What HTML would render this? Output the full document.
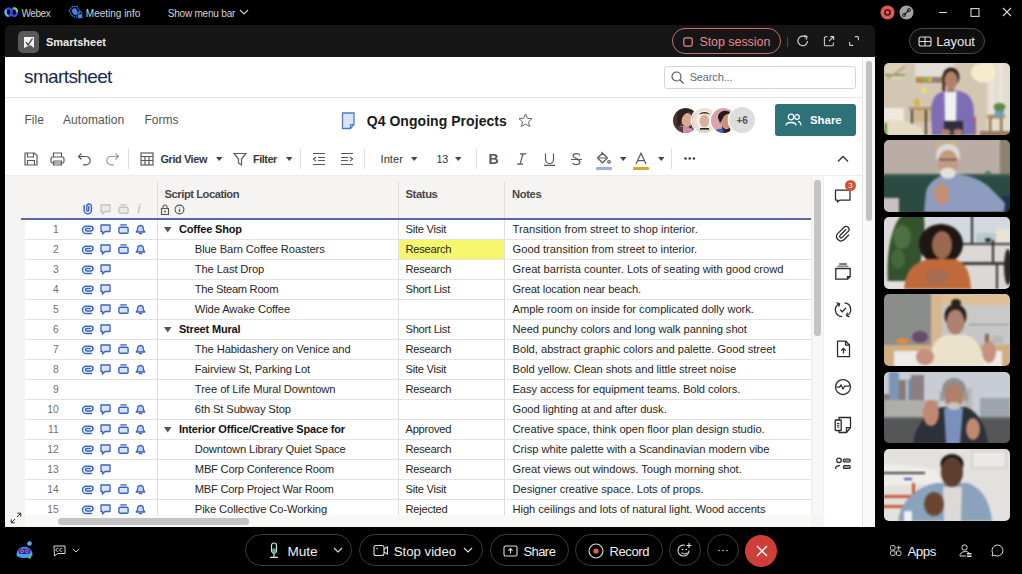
<!DOCTYPE html>
<html><head><meta charset="utf-8"><style>
html,body{margin:0;padding:0;}
body{width:1022px;height:574px;background:#000;position:relative;overflow:hidden;font-family:"Liberation Sans", sans-serif;}
.t{position:absolute;white-space:nowrap;line-height:1;}
.r{position:absolute;}
svg.r{overflow:visible;}
</style></head><body>
<svg class="r" style="left:4px;top:7px;" width="15" height="11" viewBox="0 0 15 11"><ellipse cx="4.5" cy="5.2" rx="2.9" ry="3.8" fill="none" stroke="#4346ee" stroke-width="2.2"/><path d="M4.5 9 A2.9 3.8 0 0 1 2.2 2.8" fill="none" stroke="#4fc3ee" stroke-width="2.2"/><ellipse cx="10.2" cy="5.2" rx="2.9" ry="3.8" fill="none" stroke="#4346ee" stroke-width="2.2"/><path d="M9.2 1.5 A2.9 3.8 0 0 1 13.1 5" fill="none" stroke="#5fe05a" stroke-width="2.2"/></svg>
<div class="t" style="left:21.4px;top:8.54px;font-size:10px;color:#d4d4d4;font-weight:normal;letter-spacing:-0.4px;">Webex</div>
<svg class="r" style="left:69px;top:5px;" width="15" height="14" viewBox="0 0 15 14"><g transform="rotate(-28 6 7)"><path d="M1.5 3 L6 1 L10.5 3 L10.5 7.5 C10.5 10 8 12 6 12.8 C4 12 1.5 10 1.5 7.5Z" fill="none" stroke="#4a7ee6" stroke-width="1.1" stroke-dasharray="1.6 0.6"/><path d="M3.5 4.2 L6 3 L8.5 4.2 L8.5 7.5 C8.5 9 7.2 10.2 6 10.8 C4.8 10.2 3.5 9 3.5 7.5Z" fill="#4a7ee6"/></g><rect x="8.5" y="9" width="5.2" height="4.4" rx="1" fill="#4a80ea" stroke="#000" stroke-width="0.6"/><path d="M9.6 9 V7.8 a1.5 1.5 0 0 1 3 0 V9" fill="none" stroke="#4a80ea" stroke-width="1"/></svg>
<div class="t" style="left:85.8px;top:8.54px;font-size:10px;color:#d4d4d4;font-weight:normal;letter-spacing:0px;">Meeting info</div>
<div class="t" style="left:167.7px;top:8.54px;font-size:10px;color:#d4d4d4;font-weight:normal;letter-spacing:-0.2px;">Show menu bar</div>
<svg class="r" style="left:239px;top:9px;" width="10" height="6" viewBox="0 0 10 6"><path d="M1 1 L5 5 L9 1" fill="none" stroke="#d0d0d0" stroke-width="1.1"/></svg>
<svg class="r" style="left:880px;top:5px;" width="15" height="15" viewBox="0 0 15 15"><circle cx="7.5" cy="7.5" r="7" fill="#e05a5d"/><circle cx="7.5" cy="7.5" r="2.6" fill="none" stroke="#2a0c0c" stroke-width="1.4"/></svg>
<svg class="r" style="left:899px;top:5px;" width="15" height="15" viewBox="0 0 15 15"><circle cx="7.5" cy="7.5" r="7" fill="#a0a0a0"/><path d="M5 10 L10 5" stroke="#222" stroke-width="1.3"/><circle cx="5" cy="10" r="1.5" fill="none" stroke="#222" stroke-width="1"/><circle cx="10" cy="5" r="1.5" fill="none" stroke="#222" stroke-width="1"/></svg>
<div class="r" style="left:939px;top:11.5px;width:8px;height:1.0999999999999996px;background:#d8d8d8;"></div>
<svg class="r" style="left:970px;top:8px;" width="10" height="9" viewBox="0 0 10 9"><rect x="1" y="0.6" width="8" height="7.8" fill="none" stroke="#d8d8d8" stroke-width="1.1"/></svg>
<svg class="r" style="left:1002px;top:7px;" width="10" height="10" viewBox="0 0 10 10"><path d="M1 1 L9 9 M9 1 L1 9" stroke="#d8d8d8" stroke-width="1.1"/></svg>
<div class="r" style="left:5px;top:25px;width:870px;height:32px;background:#161616;border-radius:6px 6px 0 0;"></div>
<div class="r" style="left:5px;top:57px;width:870px;height:470px;background:#ffffff;"></div>
<div class="r" style="left:18px;top:31px;width:21px;height:22px;background:#595959;border-radius:5px;"></div>
<svg class="r" style="left:23px;top:36px;" width="12" height="13" viewBox="0 0 12 13"><path d="M1 1 H11 V12 L7.5 9 L1 12Z" fill="#f2f2f2"/><path d="M3 6 L5 9 L9.5 2.5" fill="none" stroke="#3a3a3a" stroke-width="1.3"/></svg>
<div class="t" style="left:46px;top:36.79px;font-size:11px;color:#ececec;font-weight:bold;letter-spacing:0px;">Smartsheet</div>
<div class="r" style="left:672px;top:28px;width:109px;height:26px;background:transparent;border:1px solid #c8706b;border-radius:13px;box-sizing:border-box;"></div>
<svg class="r" style="left:683px;top:37px;" width="10" height="10" viewBox="0 0 10 10"><rect x="0.8" y="0.8" width="8.4" height="8.4" rx="1.8" fill="none" stroke="#ee8a82" stroke-width="1.2"/></svg>
<div class="t" style="left:699.4px;top:36.30px;font-size:12.4px;color:#ee8886;font-weight:normal;letter-spacing:0px;">Stop session</div>
<div class="r" style="left:786.5px;top:36.5px;width:1.0px;height:10.0px;background:#4a4a4a;"></div>
<svg class="r" style="left:796px;top:34px;" width="14" height="14" viewBox="0 0 14 14"><path d="M11.5 7 A4.8 4.8 0 1 1 9.8 3.2" fill="none" stroke="#cfcfcf" stroke-width="1.2"/><path d="M8 1.5 L11 2.5 L10.2 5.6" fill="none" stroke="#cfcfcf" stroke-width="1.2"/></svg>
<svg class="r" style="left:823px;top:35px;" width="12" height="12" viewBox="0 0 12 12"><path d="M4.5 1.8 H2.6 A1.2 1.2 0 0 0 1.4 3 V9.6 A1.2 1.2 0 0 0 2.6 10.8 H9.2 A1.2 1.2 0 0 0 10.4 9.6 V7.5" fill="none" stroke="#d0d0d0" stroke-width="1.1"/><path d="M6 6.2 L10.3 1.9 M7.3 1.6 H10.6 V4.9" fill="none" stroke="#d0d0d0" stroke-width="1.1"/></svg>
<svg class="r" style="left:849px;top:36px;" width="10" height="10" viewBox="0 0 10 10"><path d="M6.3 0.6 H8.4 A1 1 0 0 1 9.4 1.6 V3.7 M0.6 6.3 V8.4 A1 1 0 0 0 1.6 9.4 H3.7" fill="none" stroke="#d0d0d0" stroke-width="1.1" stroke-linecap="round"/></svg>
<div class="r" style="left:862px;top:57px;width:13px;height:470px;background:#f8f8f8;border-left:1px solid #e6e6e6;box-sizing:border-box;"></div>
<div class="r" style="left:865.5px;top:61px;width:6.0px;height:159.5px;background:#c2c2c2;border-radius:3px;"></div>
<div class="t" style="left:24px;top:66.72px;font-size:19px;color:#17294f;font-weight:normal;letter-spacing:-0.62px;">smartsheet</div>
<div class="r" style="left:664px;top:65.5px;width:191.5px;height:23.0px;background:#fff;border:1px solid #d5d5d5;border-radius:3px;box-sizing:border-box;"></div>
<svg class="r" style="left:671px;top:71px;" width="14" height="14" viewBox="0 0 14 14"><circle cx="5.5" cy="5.5" r="4.5" fill="none" stroke="#555" stroke-width="1.2"/><path d="M8.8 8.8 L12.6 12.6" stroke="#555" stroke-width="1.3"/></svg>
<div class="t" style="left:689.7px;top:72.29px;font-size:11px;color:#6a6a6a;font-weight:normal;letter-spacing:-0.15px;">Search...</div>
<div class="r" style="left:5px;top:97px;width:857px;height:1px;background:#e7e7e7;"></div>
<div class="t" style="left:24.5px;top:114.24px;font-size:12px;color:#545454;font-weight:normal;letter-spacing:0px;">File</div>
<div class="t" style="left:63px;top:114.24px;font-size:12px;color:#545454;font-weight:normal;letter-spacing:0.05px;">Automation</div>
<div class="t" style="left:144.4px;top:114.24px;font-size:12px;color:#545454;font-weight:normal;letter-spacing:0px;">Forms</div>
<svg class="r" style="left:341px;top:112px;" width="15" height="18" viewBox="0 0 15 18"><path d="M1.5 1 H13 V12.5 L9.5 16.5 H1.5Z" fill="#dbe3f7" stroke="#4d7bd0" stroke-width="1.3"/><path d="M13 12.5 H9.5 V16.5" fill="none" stroke="#4d7bd0" stroke-width="1.2"/></svg>
<div class="t" style="left:366.7px;top:114.15px;font-size:14px;color:#1a1a1a;font-weight:bold;letter-spacing:0.05px;">Q4 Ongoing Projects</div>
<svg class="r" style="left:518px;top:113px;" width="15" height="15" viewBox="0 0 15 15"><path d="M7.5 1 L9.4 5.3 L14 5.7 L10.5 8.8 L11.6 13.5 L7.5 11 L3.4 13.5 L4.5 8.8 L1 5.7 L5.6 5.3Z" fill="none" stroke="#666" stroke-width="1"/></svg>
<div class="r" style="left:672.5px;top:107.6px;width:25.4px;height:25.4px;border-radius:50%;overflow:hidden;box-shadow:0 0 0 1.3px #fff;"><svg style="position:absolute;left:-1.3px;top:-1.3px" width="28" height="28" viewBox="0 0 28 28"><rect width="28" height="28" fill="#4a3430"/><ellipse cx="16" cy="14" rx="5.5" ry="7" fill="#d9aa94"/><path d="M6 8 C8 2 20 1 23 6 C19 5 14 6 11 12 C10 16 9 20 6 20Z" fill="#2e201c"/><path d="M4 28 C6 20 12 19 16 21 C20 22 24 23 25 28Z" fill="#c98fb0"/><path d="M4 28 C5 22 8 20 12 21 L12 28Z" fill="#5a3a48"/></svg></div>
<div class="r" style="left:691.6999999999999px;top:107.6px;width:25.4px;height:25.4px;border-radius:50%;overflow:hidden;box-shadow:0 0 0 1.3px #fff;"><svg style="position:absolute;left:-1.3px;top:-1.3px" width="28" height="28" viewBox="0 0 28 28"><rect width="28" height="28" fill="#e9e1d2"/><ellipse cx="14" cy="14" rx="7.5" ry="10" fill="#f2eee8"/><ellipse cx="14.5" cy="15" rx="4.8" ry="6.5" fill="#d9b29a"/><path d="M9 9 C10 5 19 5 20 9 C18 7 11 7 9 9Z" fill="#3a2a22"/><path d="M7 28 C8 23 11 22 14 22 C17 22 21 23 22 28Z" fill="#d8d4d0"/><rect x="10" y="22" width="9" height="1.6" fill="#2a2020"/></svg></div>
<div class="r" style="left:711.0999999999999px;top:107.6px;width:25.4px;height:25.4px;border-radius:50%;overflow:hidden;box-shadow:0 0 0 1.3px #fff;"><svg style="position:absolute;left:-1.3px;top:-1.3px" width="28" height="28" viewBox="0 0 28 28"><rect width="28" height="28" fill="#d9a3aa"/><ellipse cx="16" cy="15" rx="5.5" ry="7.5" fill="#c69578"/><path d="M8 12 C7 4 20 2 22 9 C18 7 14 8 12 14 L10 17Z" fill="#231c1a"/><path d="M12 20 C14 24 18 24 20 21 L20 28 L12 28Z" fill="#2a201c"/><path d="M3 28 C5 23 9 22 13 23 L14 28Z" fill="#3a62b4"/></svg></div>
<div class="r" style="left:729.4px;top:107.3px;width:26px;height:26px;border-radius:50%;background:#dddddd;box-shadow:0 0 0 1.3px #fff;"></div>
<div class="t" style="left:736.5px;top:115.87px;font-size:10.2px;color:#585858;font-weight:bold;letter-spacing:-0.1px;">+6</div>
<div class="r" style="left:775px;top:104px;width:81px;height:32px;background:#2e7178;border-radius:3px;"></div>
<svg class="r" style="left:785px;top:113px;" width="17" height="14" viewBox="0 0 17 14"><circle cx="6" cy="4" r="2.8" fill="none" stroke="#fff" stroke-width="1.3"/><path d="M1 12.5 C1 8.5 11 8.5 11 12.5" fill="none" stroke="#fff" stroke-width="1.3"/><circle cx="12" cy="4" r="2.3" fill="none" stroke="#fff" stroke-width="1.2"/><path d="M13 8.3 C15.5 8.8 16 10.5 16 12.5" fill="none" stroke="#fff" stroke-width="1.2"/></svg>
<div class="t" style="left:810px;top:115.15px;font-size:11.4px;color:#ffffff;font-weight:bold;letter-spacing:0px;">Share</div>
<svg class="r" style="left:24px;top:152px;" width="14" height="14" viewBox="0 0 14 14"><path d="M1 1 H10.5 L13 3.5 V13 H1Z" fill="none" stroke="#5a5a5a" stroke-width="1.2"/><path d="M3.5 1 V5 H9.5 V1 M3.5 13 V8.5 H10.5 V13" fill="none" stroke="#5a5a5a" stroke-width="1.2"/></svg>
<svg class="r" style="left:50px;top:152px;" width="15" height="14" viewBox="0 0 15 14"><rect x="1" y="5" width="13" height="6" rx="1.5" fill="none" stroke="#5a5a5a" stroke-width="1.2"/><path d="M3.5 5 V1 H11.5 V5 M3.5 9 V13 H11.5 V9 H3.5" fill="none" stroke="#5a5a5a" stroke-width="1.2"/></svg>
<svg class="r" style="left:77px;top:152px;" width="15" height="14" viewBox="0 0 15 14"><path d="M4.5 1.5 L1.5 4.5 L4.5 7.5 M1.5 4.5 H9 A4.2 4.2 0 0 1 9 12.9 H6" fill="none" stroke="#5a5a5a" stroke-width="1.2"/></svg>
<svg class="r" style="left:105px;top:152px;" width="15" height="14" viewBox="0 0 15 14"><path d="M10.5 1.5 L13.5 4.5 L10.5 7.5 M13.5 4.5 H6 A4.2 4.2 0 0 0 6 12.9 H9" fill="none" stroke="#9a9a9a" stroke-width="1.2"/></svg>
<div class="r" style="left:128px;top:148px;width:1.1999999999999886px;height:21px;background:#dedede;"></div>
<svg class="r" style="left:140px;top:152px;" width="14" height="14" viewBox="0 0 14 14"><rect x="1" y="1" width="12" height="12" fill="none" stroke="#5a5a5a" stroke-width="1.2"/><path d="M1 4.5 H13 M1 8.5 H13 M5 4.5 V13 M9 4.5 V13" fill="none" stroke="#5a5a5a" stroke-width="1.2"/></svg>
<div class="t" style="left:160.5px;top:153.79px;font-size:11px;color:#3a3a3a;font-weight:bold;letter-spacing:-0.45px;">Grid View</div>
<svg class="r" style="left:216px;top:157px;" width="7" height="4" viewBox="0 0 7 4"><path d="M0 0 H6.5 L3.25 4Z" fill="#444"/></svg>
<svg class="r" style="left:233px;top:152px;" width="14" height="14" viewBox="0 0 14 14"><path d="M1 1.5 H13 L8.5 7 V13 L5.5 11 V7Z" fill="none" stroke="#5a5a5a" stroke-width="1.2"/></svg>
<div class="t" style="left:253px;top:153.79px;font-size:11px;color:#3a3a3a;font-weight:bold;letter-spacing:-0.5px;">Filter</div>
<svg class="r" style="left:285.5px;top:157px;" width="7" height="4" viewBox="0 0 7 4"><path d="M0 0 H6.5 L3.25 4Z" fill="#444"/></svg>
<div class="r" style="left:300.2px;top:148px;width:1.1999999999999886px;height:21px;background:#dedede;"></div>
<svg class="r" style="left:312px;top:152px;" width="14" height="14" viewBox="0 0 14 14"><path d="M1 1.5 H13 M1 12.5 H13 M6 5.5 H13 M6 8.5 H13 M4 5 L1.5 7 L4 9" fill="none" stroke="#5a5a5a" stroke-width="1.2"/></svg>
<svg class="r" style="left:339.5px;top:152px;" width="14" height="14" viewBox="0 0 14 14"><path d="M1 1.5 H13 M1 12.5 H13 M1 5.5 H8 M1 8.5 H8 M10 5 L12.5 7 L10 9" fill="none" stroke="#5a5a5a" stroke-width="1.2"/></svg>
<div class="r" style="left:364.2px;top:148px;width:1.1999999999999886px;height:21px;background:#dedede;"></div>
<div class="t" style="left:380.5px;top:153.79px;font-size:11px;color:#333;font-weight:normal;letter-spacing:0.1px;">Inter</div>
<svg class="r" style="left:411px;top:157px;" width="7" height="4" viewBox="0 0 7 4"><path d="M0 0 H6.5 L3.25 4Z" fill="#444"/></svg>
<div class="t" style="left:436.5px;top:153.96px;font-size:10.8px;color:#333;font-weight:normal;letter-spacing:-0.3px;">13</div>
<svg class="r" style="left:454.5px;top:157px;" width="7" height="4" viewBox="0 0 7 4"><path d="M0 0 H6.5 L3.25 4Z" fill="#444"/></svg>
<div class="r" style="left:475.8px;top:148px;width:1.1999999999999886px;height:21px;background:#dedede;"></div>
<div class="t" style="left:488.5px;top:152.45px;font-size:14px;color:#555;font-weight:bold;letter-spacing:0px;">B</div>
<svg class="r" style="left:516px;top:153px;" width="11" height="12" viewBox="0 0 11 12"><path d="M4 0.8 H10 M1 11.2 H7 M7 0.8 L4 11.2" fill="none" stroke="#555" stroke-width="1.2"/></svg>
<svg class="r" style="left:543px;top:153px;" width="13" height="13" viewBox="0 0 13 13"><path d="M2.5 0.5 V6.5 A4 4 0 0 0 10.5 6.5 V0.5 M1 12.3 H12" fill="none" stroke="#5a5a5a" stroke-width="1.2"/></svg>
<svg class="r" style="left:570px;top:153px;" width="13" height="13" viewBox="0 0 13 13"><path d="M10 2.5 C9 0 3 0 3 3 C3 5 10 6 10 9 C10 12 4 12.5 2.5 10 M1 6.5 H12" fill="none" stroke="#5a5a5a" stroke-width="1.2"/></svg>
<svg class="r" style="left:596px;top:152px;" width="16" height="12" viewBox="0 0 16 12"><path d="M1.5 6 L6.5 1.2 L11.5 6 L6.5 10.8Z M3 6 H10 M5.5 0 L6.5 1.2" fill="none" stroke="#5a5a5a" stroke-width="1.2"/><circle cx="13" cy="9.8" r="1.3" fill="none" stroke="#5a5a5a" stroke-width="1.2"/></svg>
<div class="r" style="left:595.5px;top:167px;width:16.0px;height:3px;background:#9ab0e0;border-radius:1px;"></div>
<svg class="r" style="left:619.5px;top:157px;" width="7" height="4" viewBox="0 0 7 4"><path d="M0 0 H6.5 L3.25 4Z" fill="#444"/></svg>
<svg class="r" style="left:635px;top:152px;" width="13" height="13" viewBox="0 0 13 13"><path d="M1 12 L6 1.2 L11 12 M2.8 8.6 H9.2" fill="none" stroke="#5a5a5a" stroke-width="1.2"/></svg>
<div class="r" style="left:633px;top:167px;width:16px;height:3px;background:#e0a42a;border-radius:1px;"></div>
<svg class="r" style="left:657.5px;top:157px;" width="7" height="4" viewBox="0 0 7 4"><path d="M0 0 H6.5 L3.25 4Z" fill="#444"/></svg>
<div class="r" style="left:671.2px;top:148px;width:1.1999999999999318px;height:21px;background:#dedede;"></div>
<svg class="r" style="left:684px;top:157px;" width="12" height="3" viewBox="0 0 12 3"><circle cx="1.5" cy="1.5" r="1.2" fill="#333"/><circle cx="5.7" cy="1.5" r="1.2" fill="#333"/><circle cx="9.9" cy="1.5" r="1.2" fill="#333"/></svg>
<svg class="r" style="left:837px;top:155px;" width="12" height="8" viewBox="0 0 12 8"><path d="M1 6.5 L6 1.5 L11 6.5" fill="none" stroke="#333" stroke-width="1.3"/></svg>
<div class="r" style="left:5px;top:175px;width:857px;height:1px;background:#ececec;"></div>
<div class="r" style="left:5px;top:176px;width:806px;height:43px;background:#f5f4f2;"></div>
<div class="r" style="left:5px;top:176px;width:20px;height:351px;background:#f5f4f2;"></div>
<div class="r" style="left:811px;top:176px;width:13px;height:351px;background:#f7f7f6;border-left:1px solid #ebebeb;border-right:1px solid #efefef;box-sizing:border-box;"></div>
<div class="r" style="left:5px;top:515px;width:819px;height:12px;background:#f5f4f2;"></div>
<div class="r" style="left:157px;top:182px;width:1px;height:37px;background:#dcdcdc;"></div>
<div class="r" style="left:398px;top:182px;width:1px;height:37px;background:#dcdcdc;"></div>
<div class="r" style="left:504px;top:182px;width:1px;height:37px;background:#dcdcdc;"></div>
<div class="r" style="left:21px;top:218px;width:790px;height:2px;background:#5a68ab;"></div>
<div class="t" style="left:164.6px;top:188.72px;font-size:11.2px;color:#474747;font-weight:bold;letter-spacing:-0.46px;">Script Location</div>
<div class="t" style="left:405.4px;top:188.72px;font-size:11.2px;color:#474747;font-weight:bold;letter-spacing:-0.35px;">Status</div>
<div class="t" style="left:512px;top:188.72px;font-size:11.2px;color:#474747;font-weight:bold;letter-spacing:-0.35px;">Notes</div>
<svg class="r" style="left:160px;top:204px;" width="20" height="11" viewBox="0 0 20 11"><rect x="1.5" y="4.5" width="7" height="6" fill="none" stroke="#555" stroke-width="1.1"/><path d="M3 4.5 V3 A2 2 0 0 1 7 3 V4.5" fill="none" stroke="#555" stroke-width="1.1"/><circle cx="5" cy="7.5" r="0.9" fill="#555"/><circle cx="19.5" cy="5.5" r="4.4" fill="none" stroke="#555" stroke-width="1.1"/><path d="M19.5 4.8 V8 M19.5 3 V3.6" stroke="#555" stroke-width="1.2"/></svg>
<svg class="r" style="left:83px;top:203px;" width="10" height="12" viewBox="0 0 10 12"><path d="M1.2 2.5 V7.3 A3.6 3.6 0 0 0 8.4 7.3 V3.3 A2.3 2.3 0 0 0 3.8 3.3 V7.3 A1 1 0 0 0 5.8 7.3 V3.5" fill="none" stroke="#3764c5" stroke-width="1.4" stroke-linecap="round"/></svg>
<svg class="r" style="left:100px;top:204px;" width="11" height="11" viewBox="0 0 11 11"><path d="M1 1 H10 V7.5 H5 L2.5 10 V7.5 H1Z" fill="#ebebeb" stroke="#c4c4c4" stroke-width="1.3" stroke-linejoin="round"/></svg>
<svg class="r" style="left:118px;top:204px;" width="11" height="11" viewBox="0 0 11 11"><path d="M2.3 0.9 H8.7" stroke="#c4c4c4" stroke-width="1.3"/><rect x="0.9" y="3.2" width="9.2" height="6" rx="1.3" fill="#ebebeb" stroke="#c4c4c4" stroke-width="1.4"/></svg>
<div class="t" style="left:137.5px;top:203.34px;font-size:12px;color:#b5b5b5;font-weight:normal;letter-spacing:0px;font-style:italic;font-family:"Liberation Serif",serif;">i</div>
<div class="r" style="left:0;top:0;width:1022px;height:515px;overflow:hidden;"><div class="t" style="right:963.4px;top:224.97px;font-size:10.2px;color:#6e6e6e;font-weight:normal;letter-spacing:0px;">1</div><svg class="r" style="left:82.4px;top:225.2px;" width="12" height="10" viewBox="0 0 12 10"><path d="M9.5 8.6 H4.2 A3.7 3.7 0 0 1 4.2 1.2 H8.6 A2.4 2.4 0 0 1 8.6 6 H4.6 A1.2 1.2 0 0 1 4.6 3.6 H8.2" fill="none" stroke="#3764c5" stroke-width="1.5" stroke-linecap="round"/></svg><svg class="r" style="left:100px;top:224px;" width="11" height="11" viewBox="0 0 11 11"><path d="M1 1 H10 V7.5 H5 L2.5 10 V7.5 H1Z" fill="#dbe5f8" stroke="#3764c5" stroke-width="1.3" stroke-linejoin="round"/></svg><svg class="r" style="left:118px;top:224px;" width="11" height="11" viewBox="0 0 11 11"><path d="M2.3 0.9 H8.7" stroke="#3764c5" stroke-width="1.3"/><rect x="0.9" y="3.2" width="9.2" height="6" rx="1.3" fill="#dbe5f8" stroke="#3764c5" stroke-width="1.4"/></svg><svg class="r" style="left:135px;top:224px;" width="11" height="11" viewBox="0 0 11 11"><path d="M1.2 8 H9.8 C9 7.2 8.3 6.5 8.3 4.3 A2.8 2.8 0 0 0 2.7 4.3 C2.7 6.5 2 7.2 1.2 8Z" fill="#c9d6f1" stroke="#3764c5" stroke-width="1.3" stroke-linejoin="round"/><path d="M4.3 9.7 H6.7" stroke="#3764c5" stroke-width="1.3" stroke-linecap="round"/></svg><svg class="r" style="left:164px;top:227px;" width="8" height="6" viewBox="0 0 8 6"><path d="M0 0 H7.5 L3.75 5.5Z" fill="#555"/></svg><div class="t" style="left:178.9px;top:224.49px;font-size:11px;color:#111;font-weight:bold;letter-spacing:-0.17px;">Coffee Shop</div><div class="t" style="left:405.5px;top:224.02px;font-size:11.2px;color:#262626;font-weight:normal;letter-spacing:-0.28px;">Site Visit</div><div class="t" style="left:512.5px;top:224.32px;font-size:11.2px;color:#262626;font-weight:normal;letter-spacing:0.011px;">Transition from street to shop interior.</div><div class="r" style="left:25px;top:239px;width:786px;height:1px;background:#e3e3e3;"></div><div class="r" style="left:399px;top:240px;width:105px;height:19px;background:#f7f76c;"></div><div class="t" style="right:963.4px;top:244.97px;font-size:10.2px;color:#6e6e6e;font-weight:normal;letter-spacing:0px;">2</div><svg class="r" style="left:82.4px;top:245.2px;" width="12" height="10" viewBox="0 0 12 10"><path d="M9.5 8.6 H4.2 A3.7 3.7 0 0 1 4.2 1.2 H8.6 A2.4 2.4 0 0 1 8.6 6 H4.6 A1.2 1.2 0 0 1 4.6 3.6 H8.2" fill="none" stroke="#3764c5" stroke-width="1.5" stroke-linecap="round"/></svg><svg class="r" style="left:100px;top:244px;" width="11" height="11" viewBox="0 0 11 11"><path d="M1 1 H10 V7.5 H5 L2.5 10 V7.5 H1Z" fill="#dbe5f8" stroke="#3764c5" stroke-width="1.3" stroke-linejoin="round"/></svg><svg class="r" style="left:118px;top:244px;" width="11" height="11" viewBox="0 0 11 11"><path d="M2.3 0.9 H8.7" stroke="#3764c5" stroke-width="1.3"/><rect x="0.9" y="3.2" width="9.2" height="6" rx="1.3" fill="#dbe5f8" stroke="#3764c5" stroke-width="1.4"/></svg><svg class="r" style="left:135px;top:244px;" width="11" height="11" viewBox="0 0 11 11"><path d="M1.2 8 H9.8 C9 7.2 8.3 6.5 8.3 4.3 A2.8 2.8 0 0 0 2.7 4.3 C2.7 6.5 2 7.2 1.2 8Z" fill="#c9d6f1" stroke="#3764c5" stroke-width="1.3" stroke-linejoin="round"/><path d="M4.3 9.7 H6.7" stroke="#3764c5" stroke-width="1.3" stroke-linecap="round"/></svg><div class="t" style="left:194.8px;top:244.32px;font-size:11.2px;color:#262626;font-weight:normal;letter-spacing:-0.12px;">Blue Barn Coffee Roasters</div><div class="t" style="left:405.5px;top:244.02px;font-size:11.2px;color:#262626;font-weight:normal;letter-spacing:-0.28px;">Research</div><div class="t" style="left:512.5px;top:244.32px;font-size:11.2px;color:#262626;font-weight:normal;letter-spacing:0.001px;">Good transition from street to interior.</div><div class="r" style="left:25px;top:259px;width:786px;height:1px;background:#e3e3e3;"></div><div class="t" style="right:963.4px;top:264.97px;font-size:10.2px;color:#6e6e6e;font-weight:normal;letter-spacing:0px;">3</div><svg class="r" style="left:82.4px;top:265.2px;" width="12" height="10" viewBox="0 0 12 10"><path d="M9.5 8.6 H4.2 A3.7 3.7 0 0 1 4.2 1.2 H8.6 A2.4 2.4 0 0 1 8.6 6 H4.6 A1.2 1.2 0 0 1 4.6 3.6 H8.2" fill="none" stroke="#3764c5" stroke-width="1.5" stroke-linecap="round"/></svg><svg class="r" style="left:100px;top:264px;" width="11" height="11" viewBox="0 0 11 11"><path d="M1 1 H10 V7.5 H5 L2.5 10 V7.5 H1Z" fill="#dbe5f8" stroke="#3764c5" stroke-width="1.3" stroke-linejoin="round"/></svg><div class="t" style="left:194.8px;top:264.32px;font-size:11.2px;color:#262626;font-weight:normal;letter-spacing:-0.12px;">The Last Drop</div><div class="t" style="left:405.5px;top:264.02px;font-size:11.2px;color:#262626;font-weight:normal;letter-spacing:-0.28px;">Research</div><div class="t" style="left:512.5px;top:264.32px;font-size:11.2px;color:#262626;font-weight:normal;letter-spacing:-0.001px;">Great barrista counter. Lots of seating with good crowd</div><div class="r" style="left:25px;top:279px;width:786px;height:1px;background:#e3e3e3;"></div><div class="t" style="right:963.4px;top:284.97px;font-size:10.2px;color:#6e6e6e;font-weight:normal;letter-spacing:0px;">4</div><svg class="r" style="left:82.4px;top:285.2px;" width="12" height="10" viewBox="0 0 12 10"><path d="M9.5 8.6 H4.2 A3.7 3.7 0 0 1 4.2 1.2 H8.6 A2.4 2.4 0 0 1 8.6 6 H4.6 A1.2 1.2 0 0 1 4.6 3.6 H8.2" fill="none" stroke="#3764c5" stroke-width="1.5" stroke-linecap="round"/></svg><svg class="r" style="left:100px;top:284px;" width="11" height="11" viewBox="0 0 11 11"><path d="M1 1 H10 V7.5 H5 L2.5 10 V7.5 H1Z" fill="#dbe5f8" stroke="#3764c5" stroke-width="1.3" stroke-linejoin="round"/></svg><div class="t" style="left:194.8px;top:284.32px;font-size:11.2px;color:#262626;font-weight:normal;letter-spacing:-0.3px;">The Steam Room</div><div class="t" style="left:405.5px;top:284.02px;font-size:11.2px;color:#262626;font-weight:normal;letter-spacing:-0.28px;">Short List</div><div class="t" style="left:512.5px;top:284.32px;font-size:11.2px;color:#262626;font-weight:normal;letter-spacing:-0.128px;">Great location near beach.</div><div class="r" style="left:25px;top:299px;width:786px;height:1px;background:#e3e3e3;"></div><div class="t" style="right:963.4px;top:304.97px;font-size:10.2px;color:#6e6e6e;font-weight:normal;letter-spacing:0px;">5</div><svg class="r" style="left:82.4px;top:305.2px;" width="12" height="10" viewBox="0 0 12 10"><path d="M9.5 8.6 H4.2 A3.7 3.7 0 0 1 4.2 1.2 H8.6 A2.4 2.4 0 0 1 8.6 6 H4.6 A1.2 1.2 0 0 1 4.6 3.6 H8.2" fill="none" stroke="#3764c5" stroke-width="1.5" stroke-linecap="round"/></svg><svg class="r" style="left:100px;top:304px;" width="11" height="11" viewBox="0 0 11 11"><path d="M1 1 H10 V7.5 H5 L2.5 10 V7.5 H1Z" fill="#dbe5f8" stroke="#3764c5" stroke-width="1.3" stroke-linejoin="round"/></svg><svg class="r" style="left:118px;top:304px;" width="11" height="11" viewBox="0 0 11 11"><path d="M2.3 0.9 H8.7" stroke="#3764c5" stroke-width="1.3"/><rect x="0.9" y="3.2" width="9.2" height="6" rx="1.3" fill="#dbe5f8" stroke="#3764c5" stroke-width="1.4"/></svg><svg class="r" style="left:135px;top:304px;" width="11" height="11" viewBox="0 0 11 11"><path d="M1.2 8 H9.8 C9 7.2 8.3 6.5 8.3 4.3 A2.8 2.8 0 0 0 2.7 4.3 C2.7 6.5 2 7.2 1.2 8Z" fill="#c9d6f1" stroke="#3764c5" stroke-width="1.3" stroke-linejoin="round"/><path d="M4.3 9.7 H6.7" stroke="#3764c5" stroke-width="1.3" stroke-linecap="round"/></svg><div class="t" style="left:194.8px;top:304.32px;font-size:11.2px;color:#262626;font-weight:normal;letter-spacing:-0.12px;">Wide Awake Coffee</div><div class="t" style="left:405.5px;top:304.02px;font-size:11.2px;color:#262626;font-weight:normal;letter-spacing:-0.28px;"></div><div class="t" style="left:512.5px;top:304.32px;font-size:11.2px;color:#262626;font-weight:normal;letter-spacing:-0.035px;">Ample room on inside for complicated dolly work.</div><div class="r" style="left:25px;top:319px;width:786px;height:1px;background:#e3e3e3;"></div><div class="t" style="right:963.4px;top:324.97px;font-size:10.2px;color:#6e6e6e;font-weight:normal;letter-spacing:0px;">6</div><svg class="r" style="left:82.4px;top:325.2px;" width="12" height="10" viewBox="0 0 12 10"><path d="M9.5 8.6 H4.2 A3.7 3.7 0 0 1 4.2 1.2 H8.6 A2.4 2.4 0 0 1 8.6 6 H4.6 A1.2 1.2 0 0 1 4.6 3.6 H8.2" fill="none" stroke="#3764c5" stroke-width="1.5" stroke-linecap="round"/></svg><svg class="r" style="left:100px;top:324px;" width="11" height="11" viewBox="0 0 11 11"><path d="M1 1 H10 V7.5 H5 L2.5 10 V7.5 H1Z" fill="#dbe5f8" stroke="#3764c5" stroke-width="1.3" stroke-linejoin="round"/></svg><svg class="r" style="left:164px;top:327px;" width="8" height="6" viewBox="0 0 8 6"><path d="M0 0 H7.5 L3.75 5.5Z" fill="#555"/></svg><div class="t" style="left:178.9px;top:324.49px;font-size:11px;color:#111;font-weight:bold;letter-spacing:-0.17px;">Street Mural</div><div class="t" style="left:405.5px;top:324.02px;font-size:11.2px;color:#262626;font-weight:normal;letter-spacing:-0.28px;">Short List</div><div class="t" style="left:512.5px;top:324.32px;font-size:11.2px;color:#262626;font-weight:normal;letter-spacing:-0.075px;">Need punchy colors and long walk panning shot</div><div class="r" style="left:25px;top:339px;width:786px;height:1px;background:#e3e3e3;"></div><div class="t" style="right:963.4px;top:344.97px;font-size:10.2px;color:#6e6e6e;font-weight:normal;letter-spacing:0px;">7</div><svg class="r" style="left:82.4px;top:345.2px;" width="12" height="10" viewBox="0 0 12 10"><path d="M9.5 8.6 H4.2 A3.7 3.7 0 0 1 4.2 1.2 H8.6 A2.4 2.4 0 0 1 8.6 6 H4.6 A1.2 1.2 0 0 1 4.6 3.6 H8.2" fill="none" stroke="#3764c5" stroke-width="1.5" stroke-linecap="round"/></svg><svg class="r" style="left:100px;top:344px;" width="11" height="11" viewBox="0 0 11 11"><path d="M1 1 H10 V7.5 H5 L2.5 10 V7.5 H1Z" fill="#dbe5f8" stroke="#3764c5" stroke-width="1.3" stroke-linejoin="round"/></svg><svg class="r" style="left:118px;top:344px;" width="11" height="11" viewBox="0 0 11 11"><path d="M2.3 0.9 H8.7" stroke="#3764c5" stroke-width="1.3"/><rect x="0.9" y="3.2" width="9.2" height="6" rx="1.3" fill="#dbe5f8" stroke="#3764c5" stroke-width="1.4"/></svg><svg class="r" style="left:135px;top:344px;" width="11" height="11" viewBox="0 0 11 11"><path d="M1.2 8 H9.8 C9 7.2 8.3 6.5 8.3 4.3 A2.8 2.8 0 0 0 2.7 4.3 C2.7 6.5 2 7.2 1.2 8Z" fill="#c9d6f1" stroke="#3764c5" stroke-width="1.3" stroke-linejoin="round"/><path d="M4.3 9.7 H6.7" stroke="#3764c5" stroke-width="1.3" stroke-linecap="round"/></svg><div class="t" style="left:194.8px;top:344.32px;font-size:11.2px;color:#262626;font-weight:normal;letter-spacing:-0.12px;">The Habidashery on Venice and</div><div class="t" style="left:405.5px;top:344.02px;font-size:11.2px;color:#262626;font-weight:normal;letter-spacing:-0.28px;">Research</div><div class="t" style="left:512.5px;top:344.32px;font-size:11.2px;color:#262626;font-weight:normal;letter-spacing:-0.024px;">Bold, abstract graphic colors and palette. Good street</div><div class="r" style="left:25px;top:359px;width:786px;height:1px;background:#e3e3e3;"></div><div class="t" style="right:963.4px;top:364.97px;font-size:10.2px;color:#6e6e6e;font-weight:normal;letter-spacing:0px;">8</div><svg class="r" style="left:82.4px;top:365.2px;" width="12" height="10" viewBox="0 0 12 10"><path d="M9.5 8.6 H4.2 A3.7 3.7 0 0 1 4.2 1.2 H8.6 A2.4 2.4 0 0 1 8.6 6 H4.6 A1.2 1.2 0 0 1 4.6 3.6 H8.2" fill="none" stroke="#3764c5" stroke-width="1.5" stroke-linecap="round"/></svg><svg class="r" style="left:100px;top:364px;" width="11" height="11" viewBox="0 0 11 11"><path d="M1 1 H10 V7.5 H5 L2.5 10 V7.5 H1Z" fill="#dbe5f8" stroke="#3764c5" stroke-width="1.3" stroke-linejoin="round"/></svg><svg class="r" style="left:118px;top:364px;" width="11" height="11" viewBox="0 0 11 11"><path d="M2.3 0.9 H8.7" stroke="#3764c5" stroke-width="1.3"/><rect x="0.9" y="3.2" width="9.2" height="6" rx="1.3" fill="#dbe5f8" stroke="#3764c5" stroke-width="1.4"/></svg><svg class="r" style="left:135px;top:364px;" width="11" height="11" viewBox="0 0 11 11"><path d="M1.2 8 H9.8 C9 7.2 8.3 6.5 8.3 4.3 A2.8 2.8 0 0 0 2.7 4.3 C2.7 6.5 2 7.2 1.2 8Z" fill="#c9d6f1" stroke="#3764c5" stroke-width="1.3" stroke-linejoin="round"/><path d="M4.3 9.7 H6.7" stroke="#3764c5" stroke-width="1.3" stroke-linecap="round"/></svg><div class="t" style="left:194.8px;top:364.32px;font-size:11.2px;color:#262626;font-weight:normal;letter-spacing:-0.12px;">Fairview St, Parking Lot</div><div class="t" style="left:405.5px;top:364.02px;font-size:11.2px;color:#262626;font-weight:normal;letter-spacing:-0.28px;">Site Visit</div><div class="t" style="left:512.5px;top:364.32px;font-size:11.2px;color:#262626;font-weight:normal;letter-spacing:-0.071px;">Bold yellow. Clean shots and little street noise</div><div class="r" style="left:25px;top:379px;width:786px;height:1px;background:#e3e3e3;"></div><div class="t" style="right:963.4px;top:384.97px;font-size:10.2px;color:#6e6e6e;font-weight:normal;letter-spacing:0px;">9</div><div class="t" style="left:194.8px;top:384.32px;font-size:11.2px;color:#262626;font-weight:normal;letter-spacing:-0.07px;">Tree of Life Mural Downtown</div><div class="t" style="left:405.5px;top:384.02px;font-size:11.2px;color:#262626;font-weight:normal;letter-spacing:-0.28px;">Research</div><div class="t" style="left:512.5px;top:384.32px;font-size:11.2px;color:#262626;font-weight:normal;letter-spacing:-0.109px;">Easy access for equipment teams. Bold colors.</div><div class="r" style="left:25px;top:399px;width:786px;height:1px;background:#e3e3e3;"></div><div class="t" style="right:963.4px;top:404.97px;font-size:10.2px;color:#6e6e6e;font-weight:normal;letter-spacing:0px;">10</div><svg class="r" style="left:82.4px;top:405.2px;" width="12" height="10" viewBox="0 0 12 10"><path d="M9.5 8.6 H4.2 A3.7 3.7 0 0 1 4.2 1.2 H8.6 A2.4 2.4 0 0 1 8.6 6 H4.6 A1.2 1.2 0 0 1 4.6 3.6 H8.2" fill="none" stroke="#3764c5" stroke-width="1.5" stroke-linecap="round"/></svg><svg class="r" style="left:100px;top:404px;" width="11" height="11" viewBox="0 0 11 11"><path d="M1 1 H10 V7.5 H5 L2.5 10 V7.5 H1Z" fill="#dbe5f8" stroke="#3764c5" stroke-width="1.3" stroke-linejoin="round"/></svg><svg class="r" style="left:118px;top:404px;" width="11" height="11" viewBox="0 0 11 11"><path d="M2.3 0.9 H8.7" stroke="#3764c5" stroke-width="1.3"/><rect x="0.9" y="3.2" width="9.2" height="6" rx="1.3" fill="#dbe5f8" stroke="#3764c5" stroke-width="1.4"/></svg><svg class="r" style="left:135px;top:404px;" width="11" height="11" viewBox="0 0 11 11"><path d="M1.2 8 H9.8 C9 7.2 8.3 6.5 8.3 4.3 A2.8 2.8 0 0 0 2.7 4.3 C2.7 6.5 2 7.2 1.2 8Z" fill="#c9d6f1" stroke="#3764c5" stroke-width="1.3" stroke-linejoin="round"/><path d="M4.3 9.7 H6.7" stroke="#3764c5" stroke-width="1.3" stroke-linecap="round"/></svg><div class="t" style="left:194.8px;top:404.32px;font-size:11.2px;color:#262626;font-weight:normal;letter-spacing:-0.12px;">6th St Subway Stop</div><div class="t" style="left:405.5px;top:404.02px;font-size:11.2px;color:#262626;font-weight:normal;letter-spacing:-0.28px;"></div><div class="t" style="left:512.5px;top:404.32px;font-size:11.2px;color:#262626;font-weight:normal;letter-spacing:-0.039px;">Good lighting at and after dusk.</div><div class="r" style="left:25px;top:419px;width:786px;height:1px;background:#e3e3e3;"></div><div class="t" style="right:963.4px;top:424.97px;font-size:10.2px;color:#6e6e6e;font-weight:normal;letter-spacing:0px;">11</div><svg class="r" style="left:82.4px;top:425.2px;" width="12" height="10" viewBox="0 0 12 10"><path d="M9.5 8.6 H4.2 A3.7 3.7 0 0 1 4.2 1.2 H8.6 A2.4 2.4 0 0 1 8.6 6 H4.6 A1.2 1.2 0 0 1 4.6 3.6 H8.2" fill="none" stroke="#3764c5" stroke-width="1.5" stroke-linecap="round"/></svg><svg class="r" style="left:100px;top:424px;" width="11" height="11" viewBox="0 0 11 11"><path d="M1 1 H10 V7.5 H5 L2.5 10 V7.5 H1Z" fill="#dbe5f8" stroke="#3764c5" stroke-width="1.3" stroke-linejoin="round"/></svg><svg class="r" style="left:118px;top:424px;" width="11" height="11" viewBox="0 0 11 11"><path d="M2.3 0.9 H8.7" stroke="#3764c5" stroke-width="1.3"/><rect x="0.9" y="3.2" width="9.2" height="6" rx="1.3" fill="#dbe5f8" stroke="#3764c5" stroke-width="1.4"/></svg><svg class="r" style="left:135px;top:424px;" width="11" height="11" viewBox="0 0 11 11"><path d="M1.2 8 H9.8 C9 7.2 8.3 6.5 8.3 4.3 A2.8 2.8 0 0 0 2.7 4.3 C2.7 6.5 2 7.2 1.2 8Z" fill="#c9d6f1" stroke="#3764c5" stroke-width="1.3" stroke-linejoin="round"/><path d="M4.3 9.7 H6.7" stroke="#3764c5" stroke-width="1.3" stroke-linecap="round"/></svg><svg class="r" style="left:164px;top:427px;" width="8" height="6" viewBox="0 0 8 6"><path d="M0 0 H7.5 L3.75 5.5Z" fill="#555"/></svg><div class="t" style="left:178.9px;top:424.49px;font-size:11px;color:#111;font-weight:bold;letter-spacing:-0.17px;">Interior Office/Creative Space for</div><div class="t" style="left:405.5px;top:424.02px;font-size:11.2px;color:#262626;font-weight:normal;letter-spacing:-0.28px;">Approved</div><div class="t" style="left:512.5px;top:424.32px;font-size:11.2px;color:#262626;font-weight:normal;letter-spacing:-0.03px;">Creative space, think open floor plan design studio.</div><div class="r" style="left:25px;top:439px;width:786px;height:1px;background:#e3e3e3;"></div><div class="t" style="right:963.4px;top:444.97px;font-size:10.2px;color:#6e6e6e;font-weight:normal;letter-spacing:0px;">12</div><svg class="r" style="left:82.4px;top:445.2px;" width="12" height="10" viewBox="0 0 12 10"><path d="M9.5 8.6 H4.2 A3.7 3.7 0 0 1 4.2 1.2 H8.6 A2.4 2.4 0 0 1 8.6 6 H4.6 A1.2 1.2 0 0 1 4.6 3.6 H8.2" fill="none" stroke="#3764c5" stroke-width="1.5" stroke-linecap="round"/></svg><svg class="r" style="left:100px;top:444px;" width="11" height="11" viewBox="0 0 11 11"><path d="M1 1 H10 V7.5 H5 L2.5 10 V7.5 H1Z" fill="#dbe5f8" stroke="#3764c5" stroke-width="1.3" stroke-linejoin="round"/></svg><svg class="r" style="left:118px;top:444px;" width="11" height="11" viewBox="0 0 11 11"><path d="M2.3 0.9 H8.7" stroke="#3764c5" stroke-width="1.3"/><rect x="0.9" y="3.2" width="9.2" height="6" rx="1.3" fill="#dbe5f8" stroke="#3764c5" stroke-width="1.4"/></svg><svg class="r" style="left:135px;top:444px;" width="11" height="11" viewBox="0 0 11 11"><path d="M1.2 8 H9.8 C9 7.2 8.3 6.5 8.3 4.3 A2.8 2.8 0 0 0 2.7 4.3 C2.7 6.5 2 7.2 1.2 8Z" fill="#c9d6f1" stroke="#3764c5" stroke-width="1.3" stroke-linejoin="round"/><path d="M4.3 9.7 H6.7" stroke="#3764c5" stroke-width="1.3" stroke-linecap="round"/></svg><div class="t" style="left:194.8px;top:444.32px;font-size:11.2px;color:#262626;font-weight:normal;letter-spacing:-0.12px;">Downtown Library Quiet Space</div><div class="t" style="left:405.5px;top:444.02px;font-size:11.2px;color:#262626;font-weight:normal;letter-spacing:-0.28px;">Research</div><div class="t" style="left:512.5px;top:444.32px;font-size:11.2px;color:#262626;font-weight:normal;letter-spacing:-0.046px;">Crisp white palette with a Scandinavian modern vibe</div><div class="r" style="left:25px;top:459px;width:786px;height:1px;background:#e3e3e3;"></div><div class="t" style="right:963.4px;top:464.97px;font-size:10.2px;color:#6e6e6e;font-weight:normal;letter-spacing:0px;">13</div><svg class="r" style="left:82.4px;top:465.2px;" width="12" height="10" viewBox="0 0 12 10"><path d="M9.5 8.6 H4.2 A3.7 3.7 0 0 1 4.2 1.2 H8.6 A2.4 2.4 0 0 1 8.6 6 H4.6 A1.2 1.2 0 0 1 4.6 3.6 H8.2" fill="none" stroke="#3764c5" stroke-width="1.5" stroke-linecap="round"/></svg><svg class="r" style="left:100px;top:464px;" width="11" height="11" viewBox="0 0 11 11"><path d="M1 1 H10 V7.5 H5 L2.5 10 V7.5 H1Z" fill="#dbe5f8" stroke="#3764c5" stroke-width="1.3" stroke-linejoin="round"/></svg><div class="t" style="left:194.8px;top:464.32px;font-size:11.2px;color:#262626;font-weight:normal;letter-spacing:-0.24px;">MBF Corp Conference Room</div><div class="t" style="left:405.5px;top:464.02px;font-size:11.2px;color:#262626;font-weight:normal;letter-spacing:-0.28px;">Research</div><div class="t" style="left:512.5px;top:464.32px;font-size:11.2px;color:#262626;font-weight:normal;letter-spacing:-0.043px;">Great views out windows. Tough morning shot.</div><div class="r" style="left:25px;top:479px;width:786px;height:1px;background:#e3e3e3;"></div><div class="t" style="right:963.4px;top:484.97px;font-size:10.2px;color:#6e6e6e;font-weight:normal;letter-spacing:0px;">14</div><svg class="r" style="left:82.4px;top:485.2px;" width="12" height="10" viewBox="0 0 12 10"><path d="M9.5 8.6 H4.2 A3.7 3.7 0 0 1 4.2 1.2 H8.6 A2.4 2.4 0 0 1 8.6 6 H4.6 A1.2 1.2 0 0 1 4.6 3.6 H8.2" fill="none" stroke="#3764c5" stroke-width="1.5" stroke-linecap="round"/></svg><svg class="r" style="left:100px;top:484px;" width="11" height="11" viewBox="0 0 11 11"><path d="M1 1 H10 V7.5 H5 L2.5 10 V7.5 H1Z" fill="#dbe5f8" stroke="#3764c5" stroke-width="1.3" stroke-linejoin="round"/></svg><svg class="r" style="left:118px;top:484px;" width="11" height="11" viewBox="0 0 11 11"><path d="M2.3 0.9 H8.7" stroke="#3764c5" stroke-width="1.3"/><rect x="0.9" y="3.2" width="9.2" height="6" rx="1.3" fill="#dbe5f8" stroke="#3764c5" stroke-width="1.4"/></svg><svg class="r" style="left:135px;top:484px;" width="11" height="11" viewBox="0 0 11 11"><path d="M1.2 8 H9.8 C9 7.2 8.3 6.5 8.3 4.3 A2.8 2.8 0 0 0 2.7 4.3 C2.7 6.5 2 7.2 1.2 8Z" fill="#c9d6f1" stroke="#3764c5" stroke-width="1.3" stroke-linejoin="round"/><path d="M4.3 9.7 H6.7" stroke="#3764c5" stroke-width="1.3" stroke-linecap="round"/></svg><div class="t" style="left:194.8px;top:484.32px;font-size:11.2px;color:#262626;font-weight:normal;letter-spacing:-0.25px;">MBF Corp Project War Room</div><div class="t" style="left:405.5px;top:484.02px;font-size:11.2px;color:#262626;font-weight:normal;letter-spacing:-0.28px;">Site Visit</div><div class="t" style="left:512.5px;top:484.32px;font-size:11.2px;color:#262626;font-weight:normal;letter-spacing:-0.078px;">Designer creative space. Lots of props.</div><div class="r" style="left:25px;top:499px;width:786px;height:1px;background:#e3e3e3;"></div><div class="t" style="right:963.4px;top:504.97px;font-size:10.2px;color:#6e6e6e;font-weight:normal;letter-spacing:0px;">15</div><svg class="r" style="left:82.4px;top:505.2px;" width="12" height="10" viewBox="0 0 12 10"><path d="M9.5 8.6 H4.2 A3.7 3.7 0 0 1 4.2 1.2 H8.6 A2.4 2.4 0 0 1 8.6 6 H4.6 A1.2 1.2 0 0 1 4.6 3.6 H8.2" fill="none" stroke="#3764c5" stroke-width="1.5" stroke-linecap="round"/></svg><svg class="r" style="left:100px;top:504px;" width="11" height="11" viewBox="0 0 11 11"><path d="M1 1 H10 V7.5 H5 L2.5 10 V7.5 H1Z" fill="#dbe5f8" stroke="#3764c5" stroke-width="1.3" stroke-linejoin="round"/></svg><svg class="r" style="left:118px;top:504px;" width="11" height="11" viewBox="0 0 11 11"><path d="M2.3 0.9 H8.7" stroke="#3764c5" stroke-width="1.3"/><rect x="0.9" y="3.2" width="9.2" height="6" rx="1.3" fill="#dbe5f8" stroke="#3764c5" stroke-width="1.4"/></svg><svg class="r" style="left:135px;top:504px;" width="11" height="11" viewBox="0 0 11 11"><path d="M1.2 8 H9.8 C9 7.2 8.3 6.5 8.3 4.3 A2.8 2.8 0 0 0 2.7 4.3 C2.7 6.5 2 7.2 1.2 8Z" fill="#c9d6f1" stroke="#3764c5" stroke-width="1.3" stroke-linejoin="round"/><path d="M4.3 9.7 H6.7" stroke="#3764c5" stroke-width="1.3" stroke-linecap="round"/></svg><div class="t" style="left:194.8px;top:504.32px;font-size:11.2px;color:#262626;font-weight:normal;letter-spacing:-0.12px;">Pike Collective Co-Working</div><div class="t" style="left:405.5px;top:504.02px;font-size:11.2px;color:#262626;font-weight:normal;letter-spacing:-0.28px;">Rejected</div><div class="t" style="left:512.5px;top:504.32px;font-size:11.2px;color:#262626;font-weight:normal;letter-spacing:-0.058px;">High ceilings and lots of natural light. Wood accents</div><div class="r" style="left:25px;top:519px;width:786px;height:1px;background:#e3e3e3;"></div><div class="r" style="left:157px;top:220px;width:1px;height:295px;background:#dedede;"></div><div class="r" style="left:398px;top:220px;width:1px;height:295px;background:#dedede;"></div><div class="r" style="left:504px;top:220px;width:1px;height:295px;background:#dedede;"></div></div>
<div class="r" style="left:5px;top:515px;width:819px;height:12px;background:#f5f4f2;"></div>
<div class="r" style="left:25px;top:515px;width:786px;height:12px;background:#f8f8f7;"></div>
<div class="r" style="left:57.8px;top:518.3px;width:191.2px;height:6.5px;background:#c4c4c4;border-radius:3.2px;"></div>
<div class="r" style="left:814px;top:180px;width:6.5px;height:155.5px;background:#c4c4c4;border-radius:3.2px;"></div>
<svg class="r" style="left:10px;top:512px;" width="12" height="12" viewBox="0 0 12 12"><path d="M1.2 10.8 L5 7 M1.2 10.8 V7.3 M1.2 10.8 H4.7 M10.8 1.2 L7 5 M10.8 1.2 H7.3 M10.8 1.2 V4.7" fill="none" stroke="#2a2a2a" stroke-width="1"/></svg>
<svg class="r" style="left:834px;top:186px;" width="19" height="17" viewBox="0 0 19 17"><path d="M1.5 4 H16 V14 H6 L3.5 16 V14 H1.5Z" fill="none" stroke="#2a2a2a" stroke-width="1.25" stroke-linejoin="round"/></svg>
<div class="r" style="left:845px;top:180px;width:11px;height:11px;border-radius:50%;background:#d4502f;"></div>
<div class="t" style="left:848.3px;top:181.73px;font-size:8px;color:#fff;font-weight:normal;letter-spacing:0px;">3</div>
<svg class="r" style="left:835px;top:225px;" width="17" height="17" viewBox="0 0 17 17"><path d="M11.5 5.5 L5.5 11.5 A1.5 1.5 0 0 0 7.6 13.6 L14 7.2 A3 3 0 0 0 9.8 3 L3.2 9.6 A4.4 4.4 0 0 0 9.4 15.8 L14.5 10.7" fill="none" stroke="#2a2a2a" stroke-width="1.25" transform="translate(-0.5,-1)"/></svg>
<svg class="r" style="left:834px;top:262px;" width="18" height="19" viewBox="0 0 18 19"><path d="M5.2 2 H12.8" fill="none" stroke="#2a2a2a" stroke-width="1.25"/><path d="M3.6 4.2 H14.4" stroke="#777" stroke-width="1.4"/><path d="M1.8 6.5 H16.2 V14.5 L13.5 17.2 H1.8Z" fill="#fff" stroke="#2a2a2a" stroke-width="1.3" stroke-linejoin="round"/><path d="M16.2 14.5 H13.5 V17.2" fill="none" stroke="#2a2a2a" stroke-width="1.25"/></svg>
<svg class="r" style="left:834px;top:301px;" width="18" height="18" viewBox="0 0 18 18"><path d="M5.5 2.8 A6.6 6.6 0 0 0 8 15.5" fill="none" stroke="#2a2a2a" stroke-width="1.25"/><path d="M10.5 1.9 A6.6 6.6 0 0 1 12.6 14.6" fill="none" stroke="#2a2a2a" stroke-width="1.25"/><path d="M2.6 1.6 L5.6 2.8 L4.6 5.8" fill="none" stroke="#2a2a2a" stroke-width="1.25"/><path d="M15.5 15.9 L12.6 14.6 L13.4 11.6" fill="none" stroke="#2a2a2a" stroke-width="1.25"/><path d="M6.2 8.8 L8.3 10.8 L11.8 7" fill="none" stroke="#2a2a2a" stroke-width="1.25"/></svg>
<svg class="r" style="left:836px;top:340px;" width="15" height="18" viewBox="0 0 15 18"><path d="M1.5 1 H9.5 L13.5 5 V16.5 H1.5Z M9.5 1 V5 H13.5" fill="none" stroke="#2a2a2a" stroke-width="1.25" stroke-linejoin="round"/><path d="M7.5 13.5 V8.5 M5.3 10.6 L7.5 8.3 L9.7 10.6" fill="none" stroke="#2a2a2a" stroke-width="1.25"/></svg>
<svg class="r" style="left:834px;top:378px;" width="18" height="18" viewBox="0 0 18 18"><circle cx="9" cy="9" r="7.5" fill="none" stroke="#2a2a2a" stroke-width="1.25"/><path d="M2.5 9 H5.5 L7 7 L9 11 L10.8 8 H15.5" fill="none" stroke="#2a2a2a" stroke-width="1.25"/></svg>
<svg class="r" style="left:834px;top:416px;" width="19" height="19" viewBox="0 0 19 19"><path d="M5 1.5 H16.5 V11.5 L12.5 16.5 H5Z" fill="#fff" stroke="#2a2a2a" stroke-width="1.3" stroke-linejoin="round"/><path d="M16.5 11.5 H12.5 V16.5" fill="none" stroke="#2a2a2a" stroke-width="1.25"/><rect x="1.2" y="4" width="6" height="10.5" rx="0.6" fill="#fff" stroke="#2a2a2a" stroke-width="1.3"/><path d="M3 7.5 H5.4 M3 9.3 H5.4 M3 11.1 H5.4" stroke="#2a2a2a" stroke-width="1"/></svg>
<svg class="r" style="left:834px;top:456px;" width="18" height="15" viewBox="0 0 18 15"><circle cx="5" cy="4.3" r="2.3" fill="none" stroke="#2a2a2a" stroke-width="1.25"/><path d="M1.5 13 C1.5 10.5 3 9.5 6 9.5" fill="none" stroke="#2a2a2a" stroke-width="1.25"/><rect x="9.3" y="3" width="7" height="3" rx="1.3" fill="#999" stroke="#2a2a2a" stroke-width="1.1"/><rect x="9.3" y="9.5" width="7" height="3" rx="1.3" fill="#999" stroke="#2a2a2a" stroke-width="1.1"/></svg>
<div class="r" style="left:909px;top:28.3px;width:76px;height:25.400000000000002px;background:#0e0e0e;border:1px solid #4a4a4a;border-radius:13px;box-sizing:border-box;"></div>
<svg class="r" style="left:918px;top:36px;" width="14" height="11" viewBox="0 0 14 11"><rect x="1" y="1" width="12" height="9" rx="2" fill="none" stroke="#ddd" stroke-width="1.1"/><path d="M1 5.5 H13 M7 1 V10" stroke="#ddd" stroke-width="1.1"/></svg>
<div class="t" style="left:936.2px;top:35.01px;font-size:13.1px;color:#e6e6e6;font-weight:normal;letter-spacing:-0.1px;">Layout</div>
<div class="r" style="left:884px;top:63px;width:126px;height:71.5px;border-radius:5px;overflow:hidden;background:#000;"><div style="position:absolute;left:-2px;top:-2px;width:130px;height:76px;filter:blur(0.8px);"><svg width="130" height="76" viewBox="-2 -2 130 76" style="display:block"><rect x="-2" y="-2" width="130" height="76" fill="#d3c7b4"/><rect x="103" y="-2" width="25" height="76" fill="#e4dccf"/><rect x="106" y="-2" width="4" height="76" fill="#ebe4d8"/><rect x="115" y="-2" width="4" height="76" fill="#ece6da"/><rect x="0" y="0" width="21" height="16" fill="#dcd0ba"/><rect x="0" y="11" width="21" height="2" fill="#7e9a60"/><path d="M2 16 L21 2 L21 5 L5 16Z" fill="#b8a07a"/><rect x="31" y="0" width="39" height="21" fill="#e3ded6"/><rect x="32" y="14" width="37" height="6" fill="#9c7c55"/><rect x="34" y="15" width="4" height="3.5" fill="#e58a3a"/><rect x="39" y="15" width="4" height="3.5" fill="#8cc05a"/><rect x="44" y="15" width="4" height="3.5" fill="#d8c840"/><rect x="49" y="15" width="4" height="3.5" fill="#8878c8"/><ellipse cx="99.5" cy="9.5" rx="12.5" ry="10" fill="#f5eccd"/><ellipse cx="33" cy="39.5" rx="2.5" ry="4" fill="#d9b530"/><rect x="38" y="24" width="4" height="6" fill="#e8e070"/><rect x="25" y="44" width="24" height="3" fill="#b09670"/><rect x="29" y="47" width="19" height="12" fill="#cdb68c"/><rect x="27" y="47" width="1.8" height="25" fill="#3a3028"/><rect x="41" y="47" width="1.8" height="25" fill="#3a3028"/><rect x="-2" y="45" width="22" height="15" fill="#efe9dd"/><path d="M-2 72 L-2 58 C10 55 28 58 38 66 L40 72Z" fill="#e6dcc6"/><rect x="0" y="60" width="3" height="12" fill="#6a9a40"/><ellipse cx="112" cy="53.5" rx="10" ry="2" fill="#a8885e"/><rect x="105" y="55" width="2.5" height="17" fill="#8e7050"/><rect x="116" y="55" width="2.5" height="17" fill="#8e7050"/><rect x="111" y="46" width="9" height="8" fill="#6aa0b8"/><ellipse cx="115.5" cy="44" rx="6" ry="4" fill="#5a8a40"/><rect x="88" y="54" width="4" height="18" fill="#c8583a"/><rect x="88" y="62" width="4" height="5" fill="#4a8a5a"/><rect x="96" y="68" width="30" height="5" fill="#9a7a58"/><path d="M48 72 L47 50 C47 37 51 31 58 29 L62 27.5 L73 27.5 L80 29.5 C88 33 90 41 90 52 L91 72Z" fill="#7e6cb5"/><path d="M60.5 28.5 L72.5 28.5 L72 59 L61 59Z" fill="#f1f1ef"/><rect x="60" y="58" width="19" height="14" fill="#2e2e3a"/><ellipse cx="62" cy="69" rx="5" ry="3" fill="#b48068"/><ellipse cx="74" cy="69" rx="5" ry="3" fill="#b48068"/><rect x="63.5" y="22" width="6.5" height="7" fill="#a87660"/><ellipse cx="67" cy="14" rx="8.5" ry="9.5" fill="#2a1c17"/><rect x="58.5" y="12" width="2.5" height="16" fill="#2a1c17"/><ellipse cx="67" cy="17" rx="6.8" ry="9" fill="#b0806a"/></svg></div></div>
<div class="r" style="left:884px;top:140px;width:126px;height:71.5px;border-radius:5px;overflow:hidden;background:#000;"><div style="position:absolute;left:-2px;top:-2px;width:130px;height:76px;filter:blur(0.8px);"><svg width="130" height="76" viewBox="-2 -2 130 76" style="display:block"><rect x="-2" y="-2" width="130" height="38" fill="#b9ada5"/><rect x="116" y="-2" width="12" height="38" fill="#8c8070"/><rect x="51" y="0" width="22" height="12" fill="#c2b290"/><rect x="-2" y="34" width="130" height="40" fill="#2b4a42"/><rect x="-2" y="34" width="130" height="3" fill="#365a50"/><ellipse cx="104" cy="33" rx="3" ry="2" fill="#5a7a50"/><rect x="-2" y="58" width="17" height="16" fill="#c9c1c0"/><rect x="118" y="56" width="10" height="18" fill="#22304a"/><path d="M40 72 L42 52 C44 43 52 37 60 35 L75 34 C90 37 100 41 108 50 L121 63 L120 72Z" fill="#8e9cc0"/><ellipse cx="64" cy="15" rx="12" ry="11" fill="#dcdad6"/><ellipse cx="64" cy="23" rx="10" ry="13" fill="#c49a80"/><ellipse cx="64" cy="33" rx="8" ry="5.5" fill="#e2e0dc"/><rect x="55" y="19" width="18" height="1.2" fill="#4a4040"/><ellipse cx="57.5" cy="54" rx="8" ry="11" fill="#c09078"/></svg></div></div>
<div class="r" style="left:884px;top:217px;width:126px;height:71.5px;border-radius:5px;overflow:hidden;background:#000;"><div style="position:absolute;left:-2px;top:-2px;width:130px;height:76px;filter:blur(0.8px);"><svg width="130" height="76" viewBox="-2 -2 130 76" style="display:block"><rect x="-2" y="-2" width="130" height="76" fill="#dcd8d6"/><rect x="45" y="-2" width="83" height="29" fill="#d2dae0"/><rect x="87" y="-2" width="2" height="29" fill="#2a2a2a"/><rect x="45" y="26" width="83" height="2" fill="#3a3a3a"/><rect x="112" y="12" width="14" height="14" fill="#e8e4d4"/><rect x="92" y="16" width="20" height="10" fill="#b8c8cc"/><rect x="75" y="45" width="51" height="3" fill="#3a3a3a"/><rect x="108" y="23" width="2" height="22" fill="#2a2a2a"/><ellipse cx="104" cy="23" rx="3" ry="2" fill="#2a2a2a"/><rect x="112" y="48" width="2" height="24" fill="#303030"/><ellipse cx="124" cy="50" rx="4" ry="18" fill="#262626"/><path d="M4 66 C2 40 6 10 18 -2 L40 -2 C42 20 38 45 30 66Z" fill="#34522e"/><ellipse cx="18" cy="20" rx="9" ry="12" fill="#4e7040"/><ellipse cx="14" cy="42" rx="7" ry="10" fill="#456a3a"/><rect x="3" y="64" width="20" height="9" fill="#e4e0dc"/><ellipse cx="57" cy="27" rx="22" ry="20" fill="#1e1612"/><ellipse cx="58" cy="28" rx="10" ry="14" fill="#9a6850"/><path d="M20 72 C22 52 30 45 46 42 L70 42 C82 45 86 55 87 72Z" fill="#c06a3a"/><ellipse cx="53" cy="60" rx="12" ry="8" fill="#a86a50"/></svg></div></div>
<div class="r" style="left:884px;top:294px;width:126px;height:71.5px;border-radius:5px;overflow:hidden;background:#000;"><div style="position:absolute;left:-2px;top:-2px;width:130px;height:76px;filter:blur(0.8px);"><svg width="130" height="76" viewBox="-2 -2 130 76" style="display:block"><rect x="-2" y="-2" width="50" height="54" fill="#8b8d8b"/><rect x="47" y="-2" width="11" height="54" fill="#d6b890"/><rect x="58" y="-2" width="70" height="13" fill="#dcc09a"/><rect x="58" y="11" width="70" height="19" fill="#c9c9c7"/><rect x="58" y="30" width="70" height="21" fill="#c4c6c8"/><rect x="85" y="30" width="40" height="1" fill="#8a8a8a"/><rect x="-2" y="51" width="130" height="23" fill="#d0ae80"/><rect x="10" y="57" width="108" height="17" fill="#eeebe6"/><ellipse cx="18.5" cy="47" rx="6.5" ry="3" fill="#e08a40"/><ellipse cx="36" cy="43" rx="8" ry="6" fill="#6a4a6a"/><rect x="108" y="42" width="11" height="7" fill="#b8b8b8"/><rect x="101" y="40" width="4" height="9" fill="#8a6a4a"/><path d="M45 72 C46 52 52 44 62 41 L82 41 C94 44 98 55 100 72Z" fill="#ebe2cc"/><ellipse cx="71.5" cy="22" rx="11" ry="12" fill="#2a201a"/><ellipse cx="72" cy="9" rx="5" ry="4" fill="#2a201a"/><ellipse cx="71.5" cy="28" rx="9" ry="12.5" fill="#b08070"/><ellipse cx="41" cy="63" rx="9" ry="8" fill="#c49080"/><ellipse cx="105" cy="58" rx="7" ry="11" fill="#c49080"/></svg></div></div>
<div class="r" style="left:884px;top:371.5px;width:126px;height:71.5px;border-radius:5px;overflow:hidden;background:#000;"><div style="position:absolute;left:-2px;top:-2px;width:130px;height:76px;filter:blur(0.8px);"><svg width="130" height="76" viewBox="-2 -2 130 76" style="display:block"><rect x="-2" y="-2" width="130" height="48" fill="#c8ccd4"/><rect x="5" y="0" width="10" height="30" fill="#7a95b5"/><rect x="15" y="8" width="7" height="28" fill="#8a7a7a"/><rect x="24" y="7" width="9" height="28" fill="#6f8eb2"/><rect x="27" y="3" width="13" height="30" fill="#8a7e80"/><rect x="-2" y="22" width="7" height="22" fill="#8a7a7a"/><rect x="0" y="28" width="55" height="18" fill="#b0aeaa"/><rect x="80" y="16" width="8" height="30" fill="#b8b8b8"/><rect x="96" y="26" width="30" height="20" fill="#9ea4ac"/><rect x="-2" y="45" width="130" height="29" fill="#545658"/><rect x="-2" y="45" width="130" height="2" fill="#6a6c6e"/><path d="M29 72 C32 50 45 39 58 35 L82 35 C95 40 102 55 104 72Z" fill="#2c3038"/><path d="M60 36 L79 36 L76 72 L62 72Z" fill="#7c90c0"/><ellipse cx="70" cy="18" rx="12" ry="12" fill="#8e8e8e"/><ellipse cx="70" cy="25" rx="9.5" ry="12.5" fill="#b08068"/><rect x="56" y="20" width="4" height="9" fill="#9a9a9a"/><rect x="80" y="20" width="4" height="9" fill="#9a9a9a"/><ellipse cx="70" cy="34" rx="7" ry="4" fill="#c8c4c0"/><ellipse cx="47" cy="41" rx="8" ry="13" fill="#c08870"/><ellipse cx="89" cy="57" rx="7" ry="11" fill="#c08870"/></svg></div></div>
<div class="r" style="left:884px;top:449px;width:126px;height:71.5px;border-radius:5px;overflow:hidden;background:#000;"><div style="position:absolute;left:-2px;top:-2px;width:130px;height:76px;filter:blur(0.8px);"><svg width="130" height="76" viewBox="-2 -2 130 76" style="display:block"><rect x="-2" y="-2" width="130" height="76" fill="#e3e1dd"/><rect x="88" y="2" width="34" height="17" fill="#ebe9e5" stroke="#cfcbc5" stroke-width="1.5"/><path d="M-2 14 L52 20 L58 34 L-2 37Z" fill="#eeedea"/><rect x="-2" y="23" width="43" height="2" fill="#3a3a3a"/><rect x="20" y="29" width="8" height="2" fill="#4a4ab0"/><rect x="28" y="34" width="3" height="17" fill="#c85a3a"/><rect x="-2" y="46" width="32" height="3" fill="#c85a3a"/><rect x="-2" y="56" width="27" height="3" fill="#c85a3a"/><path d="M14 72 C18 48 35 38 52 34 L84 34 C100 40 106 55 108 72Z" fill="#8aa2bc"/><path d="M59 38 L78 38 L77 72 L60 72Z" fill="#dcdad6"/><ellipse cx="68" cy="15" rx="11.5" ry="10" fill="#1c1410"/><ellipse cx="68" cy="23" rx="11" ry="15" fill="#5e3e2c"/><ellipse cx="50" cy="55" rx="10" ry="12" fill="#6a4632"/><rect x="20" y="62" width="8" height="10" fill="#f0f0ee"/></svg></div></div>
<svg class="r" style="left:15px;top:540px;" width="20" height="20" viewBox="0 0 20 20"><circle cx="14.5" cy="3.5" r="2.3" fill="#5ab0f5"/><path d="M1.5 15 C1.5 4 17.5 4 17.5 15 C17.5 19 1.5 19 1.5 15Z" fill="#4b9cf0"/><rect x="3.5" y="8.5" width="12" height="5.5" rx="2.7" fill="#4a1f9e"/><circle cx="7" cy="11.2" r="1.4" fill="none" stroke="#8aa0d0" stroke-width="0.8"/><circle cx="12" cy="11.2" r="1.4" fill="none" stroke="#8aa0d0" stroke-width="0.8"/><circle cx="14.5" cy="17" r="1.7" fill="#4fc27a"/></svg>
<svg class="r" style="left:53px;top:545px;" width="13" height="12" viewBox="0 0 13 12"><path d="M1 1 H12 V8.5 H4.5 L1.5 11 Z" fill="none" stroke="#d8d8d8" stroke-width="1"/><path d="M5.5 3.8 A1.5 1.5 0 1 0 5.5 6 M9.3 3.8 A1.5 1.5 0 1 0 9.3 6" fill="none" stroke="#d8d8d8" stroke-width="0.9"/></svg>
<svg class="r" style="left:72px;top:548px;" width="8" height="5" viewBox="0 0 8 5"><path d="M0.8 0.8 L4 4 L7.2 0.8" fill="none" stroke="#cfcfcf" stroke-width="1"/></svg>
<div class="r" style="left:244.5px;top:534px;width:107.5px;height:32px;background:transparent;border:1px solid #3a3a3a;border-radius:16px;box-sizing:border-box;"></div>
<svg class="r" style="left:268px;top:542px;" width="12" height="17" viewBox="0 0 12 17"><rect x="3.5" y="1" width="5" height="10" rx="2.5" fill="none" stroke="#e0e0e0" stroke-width="1.2"/><rect x="4.3" y="6.5" width="3.4" height="4" fill="#3fc58a"/><path d="M6 11 V15 M2 15.3 H10" stroke="#e0e0e0" stroke-width="1.2"/></svg>
<div class="t" style="left:287.6px;top:544.89px;font-size:13.6px;color:#f0f0f0;font-weight:normal;letter-spacing:-0.1px;">Mute</div>
<svg class="r" style="left:332.5px;top:547px;" width="10" height="6" viewBox="0 0 10 6"><path d="M1 1 L5 5 L9 1" fill="none" stroke="#dcdcdc" stroke-width="1.2"/></svg>
<div class="r" style="left:359px;top:534px;width:123.5px;height:32px;background:transparent;border:1px solid #3a3a3a;border-radius:16px;box-sizing:border-box;"></div>
<svg class="r" style="left:373px;top:544px;" width="16" height="13" viewBox="0 0 16 13"><rect x="1" y="1.5" width="10" height="10" rx="2" fill="none" stroke="#e0e0e0" stroke-width="1.1"/><path d="M11 5 L14.5 3 V10 L11 8" fill="none" stroke="#e0e0e0" stroke-width="1.1"/><circle cx="4" cy="4.5" r="0.9" fill="#3fc58a"/></svg>
<div class="t" style="left:393.8px;top:544.83px;font-size:13.2px;color:#f0f0f0;font-weight:normal;letter-spacing:0px;">Stop video</div>
<svg class="r" style="left:463px;top:547px;" width="10" height="6" viewBox="0 0 10 6"><path d="M1 1 L5 5 L9 1" fill="none" stroke="#dcdcdc" stroke-width="1.2"/></svg>
<div class="r" style="left:489.7px;top:534px;width:79.00000000000006px;height:32px;background:transparent;border:1px solid #3a3a3a;border-radius:16px;box-sizing:border-box;"></div>
<svg class="r" style="left:503px;top:545px;" width="15" height="12" viewBox="0 0 15 12"><rect x="1" y="1" width="13" height="10" rx="1.5" fill="none" stroke="#e0e0e0" stroke-width="1.1"/><path d="M7.5 8.5 V3.8 M5.5 5.6 L7.5 3.6 L9.5 5.6" fill="none" stroke="#e0e0e0" stroke-width="1.1"/></svg>
<div class="t" style="left:523.4px;top:545.00px;font-size:13px;color:#f0f0f0;font-weight:normal;letter-spacing:-0.55px;">Share</div>
<div class="r" style="left:575px;top:534px;width:87.5px;height:32px;background:transparent;border:1px solid #3a3a3a;border-radius:16px;box-sizing:border-box;"></div>
<svg class="r" style="left:588px;top:543px;" width="16" height="16" viewBox="0 0 16 16"><circle cx="8" cy="8" r="7" fill="none" stroke="#e0e0e0" stroke-width="1.1"/><circle cx="8" cy="8" r="2.6" fill="#f0603f"/></svg>
<div class="t" style="left:609.5px;top:545.00px;font-size:13px;color:#f0f0f0;font-weight:normal;letter-spacing:-0.4px;">Record</div>
<div class="r" style="left:668.7px;top:534px;width:32.0px;height:32px;background:transparent;border:1px solid #3a3a3a;border-radius:50%;box-sizing:border-box;"></div>
<svg class="r" style="left:676px;top:542px;" width="17" height="17" viewBox="0 0 17 17"><path d="M13 8.5 A5.5 5.5 0 1 1 9 3.2" fill="none" stroke="#e0e0e0" stroke-width="1.1"/><path d="M5.5 10.5 C6.8 12.5 10.2 12.5 11.5 10.5" fill="none" stroke="#e0e0e0" stroke-width="1.1"/><circle cx="6.5" cy="7.5" r="0.8" fill="#e0e0e0"/><circle cx="10.2" cy="7.5" r="0.8" fill="#e0e0e0"/><path d="M13 1 V6 M10.5 3.5 H15.5" stroke="#e0e0e0" stroke-width="1.1"/></svg>
<div class="r" style="left:707px;top:534px;width:32px;height:32px;background:transparent;border:1px solid #3a3a3a;border-radius:50%;box-sizing:border-box;"></div>
<svg class="r" style="left:717px;top:549px;" width="12" height="3" viewBox="0 0 12 3"><circle cx="2" cy="1.5" r="0.75" fill="#e0e0e0"/><circle cx="6" cy="1.5" r="0.75" fill="#e0e0e0"/><circle cx="10" cy="1.5" r="0.75" fill="#e0e0e0"/></svg>
<div class="r" style="left:745.4px;top:534.5px;width:32.0px;height:32.0px;background:#cf3f39;border-radius:50%;"></div>
<svg class="r" style="left:755.5px;top:544.5px;" width="12" height="12" viewBox="0 0 12 12"><path d="M1 1 L11 11 M11 1 L1 11" stroke="#fff" stroke-width="1.4"/></svg>
<svg class="r" style="left:890px;top:545px;" width="12" height="11" viewBox="0 0 12 11"><rect x="0.6" y="0.6" width="4.4" height="4.4" rx="1" fill="none" stroke="#ddd" stroke-width="0.9"/><rect x="0.6" y="6" width="4.4" height="4.4" rx="1" fill="none" stroke="#ddd" stroke-width="0.9"/><rect x="6.5" y="6" width="4.4" height="4.4" rx="1" fill="none" stroke="#ddd" stroke-width="0.9"/><path d="M8.7 0.5 V5 M6.5 2.7 H11" stroke="#ddd" stroke-width="0.9"/></svg>
<div class="t" style="left:907.5px;top:545.04px;font-size:13.3px;color:#f0f0f0;font-weight:normal;letter-spacing:-0.5px;">Apps</div>
<svg class="r" style="left:959px;top:544px;" width="13" height="13" viewBox="0 0 13 13"><circle cx="5.5" cy="3.5" r="2.7" fill="none" stroke="#ddd" stroke-width="1"/><path d="M1 12 C0.5 7 9 6.5 10 9" fill="none" stroke="#ddd" stroke-width="1"/><path d="M1 12 H7 M8 9.5 H12.5 M8 11 H12.5 M8 12.5 H12.5" stroke="#ddd" stroke-width="1"/></svg>
<svg class="r" style="left:991px;top:544px;" width="13" height="13" viewBox="0 0 13 13"><path d="M6.5 1 A5.5 5.5 0 1 1 3.8 11.3 L1 12 L1.8 9.2 A5.5 5.5 0 0 1 6.5 1Z" fill="none" stroke="#ddd" stroke-width="1"/></svg>
</body></html>
